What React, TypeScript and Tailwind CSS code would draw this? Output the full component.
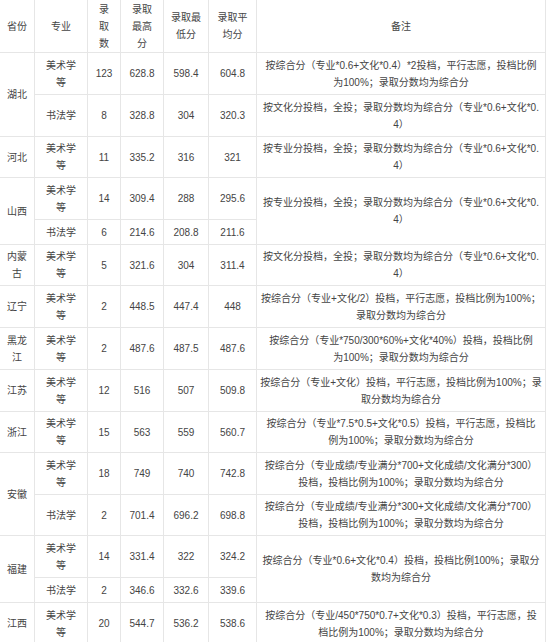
import { Fragment, type ReactNode } from "react";

type Row = { major: string; count: string; max: string; min: string; avg: string; note?: string };
type Group = { province: string; rows: Row[]; note?: string };

const ART = "美术学\n等";
const CAL = "书法学";

const groups: Group[] = [
  {
    province: "湖北",
    rows: [
      { major: ART, count: "123", max: "628.8", min: "598.4", avg: "604.8", note: "按综合分（专业*0.6+文化*0.4）*2投档，平行志愿，投档比例\n为100%；录取分数均为综合分" },
      { major: CAL, count: "8", max: "328.8", min: "304", avg: "320.3", note: "按文化分投档，全投；录取分数均为综合分（专业*0.6+文化*0.\n4）" },
    ],
  },
  {
    province: "河北",
    rows: [{ major: ART, count: "11", max: "335.2", min: "316", avg: "321", note: "按专业分投档，全投；录取分数均为综合分（专业*0.6+文化*0.\n4）" }],
  },
  {
    province: "山西",
    note: "按专业分投档，全投；录取分数均为综合分（专业*0.6+文化*0.\n4）",
    rows: [
      { major: ART, count: "14", max: "309.4", min: "288", avg: "295.6" },
      { major: CAL, count: "6", max: "214.6", min: "208.8", avg: "211.6" },
    ],
  },
  {
    province: "内蒙\n古",
    rows: [{ major: ART, count: "5", max: "321.6", min: "304", avg: "311.4", note: "按文化分投档，全投；录取分数均为综合分（专业*0.6+文化*0.\n4）" }],
  },
  {
    province: "辽宁",
    rows: [{ major: ART, count: "2", max: "448.5", min: "447.4", avg: "448", note: "按综合分（专业+文化/2）投档，平行志愿，投档比例为100%；\n录取分数均为综合分" }],
  },
  {
    province: "黑龙\n江",
    rows: [{ major: ART, count: "2", max: "487.6", min: "487.5", avg: "487.6", note: "按综合分（专业*750/300*60%+文化*40%）投档，投档比例\n为100%；录取分数均为综合分" }],
  },
  {
    province: "江苏",
    rows: [{ major: ART, count: "12", max: "516", min: "507", avg: "509.8", note: "按综合分（专业+文化）投档，平行志愿，投档比例为100%；录\n取分数均为综合分" }],
  },
  {
    province: "浙江",
    rows: [{ major: ART, count: "15", max: "563", min: "559", avg: "560.7", note: "按综合分（专业*7.5*0.5+文化*0.5）投档，平行志愿，投档比\n例为100%；录取分数均为综合分" }],
  },
  {
    province: "安徽",
    rows: [
      { major: ART, count: "18", max: "749", min: "740", avg: "742.8", note: "按综合分（专业成绩/专业满分*700+文化成绩/文化满分*300）\n投档，投档比例为100%；录取分数均为综合分" },
      { major: CAL, count: "2", max: "701.4", min: "696.2", avg: "698.8", note: "按综合分（专业成绩/专业满分*300+文化成绩/文化满分*700）\n投档，投档比例为100%；录取分数均为综合分" },
    ],
  },
  {
    province: "福建",
    note: "按综合分（专业*0.6+文化*0.4）投档，投档比例100%；录取分\n数均为综合分",
    rows: [
      { major: ART, count: "14", max: "331.4", min: "322", avg: "324.2" },
      { major: CAL, count: "2", max: "346.6", min: "332.6", avg: "339.6" },
    ],
  },
  {
    province: "江西",
    rows: [{ major: ART, count: "20", max: "544.7", min: "536.2", avg: "538.6", note: "按综合分（专业/450*750*0.7+文化*0.3）投档，平行志愿，投\n档比例为100%；录取分数均为综合分" }],
  },
];

const headers = ["省份", "专业", "录\n取\n数", "录取\n最高\n分", "录取最\n低分", "录取平\n均分", "备注"];

function Cell({ children, span }: { children: ReactNode; span?: boolean }) {
  return (
    <div
      className={
        "flex items-center justify-center text-center whitespace-pre-line border-r border-b border-[#e6e6e6] " +
        (span ? "row-span-2" : "")
      }
    >
      {children}
    </div>
  );
}

export default function App() {
  return (
    <div className="h-[642px] w-[549px] overflow-hidden bg-white">
      <div
        className="grid w-[546px] grid-cols-[35px_53px_33px_43px_45px_48px_289px] grid-rows-[53px_42px_42px_41px_42px_25px_41px_42px_42px_42px_41px_42px_41px_42px_25px_42px] text-[10px] leading-[17px] text-[#444444]"
        style={{ fontFamily: '"Liberation Sans", "Noto Sans CJK SC", sans-serif' }}
      >
        {headers.map((h) => (
          <Cell key={h}>{h}</Cell>
        ))}

        {/* provinces with two majors share the province cell, sometimes the note too */}
        {groups.map((g) => {
          const multi = g.rows.length > 1;
          return g.rows.map((r, i) => (
            <Fragment key={g.province + i}>
              {i === 0 && <Cell span={multi}>{g.province}</Cell>}
              <Cell>{r.major}</Cell>
              <Cell>{r.count}</Cell>
              <Cell>{r.max}</Cell>
              <Cell>{r.min}</Cell>
              <Cell>{r.avg}</Cell>
              {r.note ? <Cell>{r.note}</Cell> : i === 0 && g.note ? <Cell span>{g.note}</Cell> : null}
            </Fragment>
          ));
        })}
      </div>
    </div>
  );
}
